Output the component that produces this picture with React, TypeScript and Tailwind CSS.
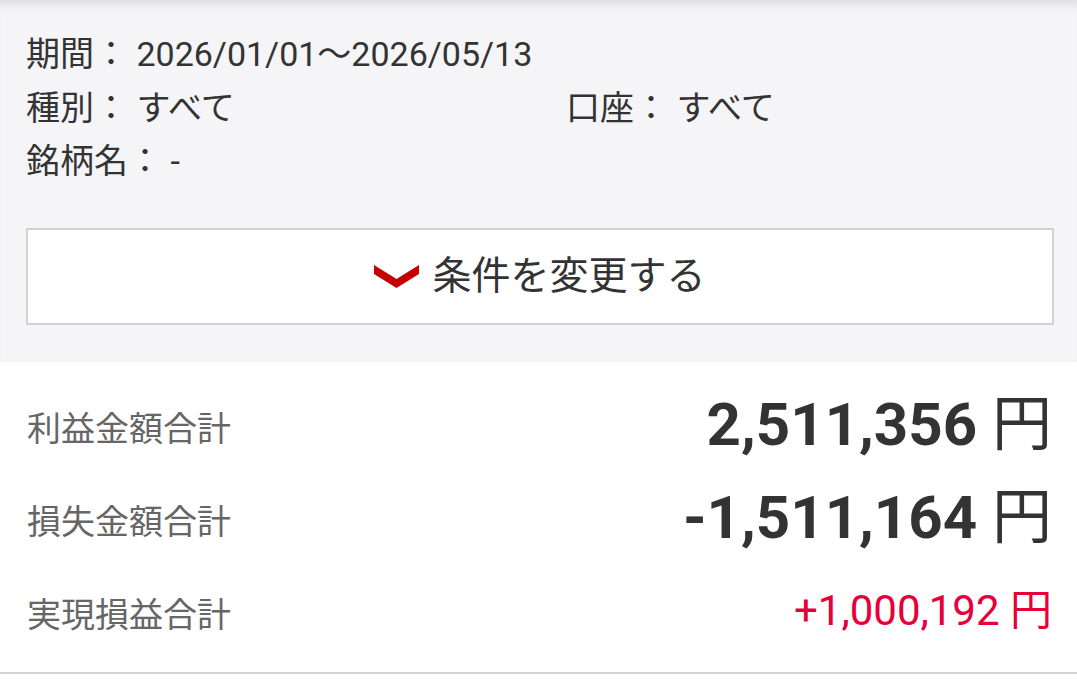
import React from "react";

const font = { fontFamily: "Roboto, 'Noto Sans CJK JP', sans-serif" };

function Chevron() {
  return (
    <svg width="45" height="23" viewBox="0 0 45 23" className="shrink-0">
      <polygon points="0,0 22.5,14 45,0 45,9 22.5,23 0,9" fill="#c40000" />
    </svg>
  );
}

function Row({ label, value, big, red }: { label: string; value: string; big?: boolean; red?: boolean }) {
  return (
    <div className="flex h-[93px] items-center justify-between">
      <span className="mt-[8px] text-[34px] text-[#666666]">{label}</span>
      {big ? (
        <span className="text-[60px] leading-none text-[#333333]">
          <span className="font-bold">{value}</span>
          <span className="font-normal"> 円</span>
        </span>
      ) : (
        <span className={`text-[42px] leading-none ${red ? "text-[#e5003a]" : "text-[#333333]"}`}>
          {value} 円
        </span>
      )}
    </div>
  );
}

export default function App() {
  return (
    <div className="w-[1077px] h-[686px] overflow-hidden bg-white" style={font}>
      <div className="bg-[#f5f5f7] pl-[26px] pr-[23px] pt-[28px] pb-[37px] shadow-[inset_0_10px_10px_-6px_rgba(0,0,0,0.10)]">
        <div className="text-[34px] leading-[53.5px] text-[#333333]">
          <div>期間： 2026/01/01～2026/05/13</div>
          <div className="flex">
            <div className="w-[540px]">種別： すべて</div>
            <div>口座： すべて</div>
          </div>
          <div>銘柄名： -</div>
        </div>
        <div className="mt-[39px] flex h-[97px] items-center justify-center gap-[13px] border-2 border-[#d2d2d2] bg-white">
          <Chevron />
          <span className="text-[39px] text-[#333333]">条件を変更する</span>
        </div>
      </div>
      <div className="border-b-2 border-[#d2d2d2] pl-[27px] pr-[25px] pt-[17px] pb-[14px]">
        <Row label="利益金額合計" value="2,511,356" big />
        <Row label="損失金額合計" value="-1,511,164" big />
        <Row label="実現損益合計" value="+1,000,192" red />
      </div>
    </div>
  );
}
